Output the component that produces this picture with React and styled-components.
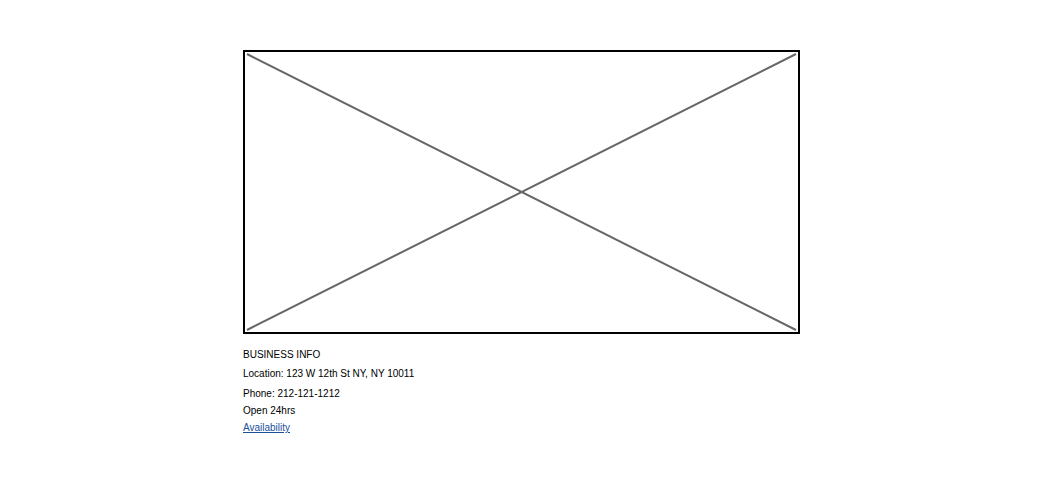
import React from 'react';
import styled, { createGlobalStyle } from "styled-components";

const GlobalStyle = createGlobalStyle`
    body {
        margin: 0;
        background: #ffffff;
        font-family: "Liberation Sans", Arial, sans-serif;
        color: #000000;
    }
`;

const Page = styled.div`
    padding: 50px 0 0 243px;
`;

const Placeholder = styled.div`
    box-sizing: border-box;
    width: 557px;
    height: 284px;
    border: 2px solid #000000;
`;

const Cross = styled.svg`
    display: block;
    width: 100%;
    height: 100%;
`;

const Info = styled.div`
    margin-top: 14px;
    display: flex;
    flex-direction: column;
    align-items: flex-start;
    font-size: 10px;
`;

const Line = styled.div`
    line-height: 13px;
    margin-bottom: ${props => props.gap}px;
`;

const Link = styled.a`
    color: #1b4f9a;
    text-decoration: underline;
    line-height: 13px;
`;

const App = () => {
    return (
        <Page>
            <GlobalStyle />
            <Placeholder>
                <Cross viewBox="0 0 553 280" preserveAspectRatio="none">
                    <line x1="2" y1="2" x2="551" y2="278" stroke="#666666" strokeWidth="2" />
                    <line x1="551" y1="2" x2="2" y2="278" stroke="#666666" strokeWidth="2" />
                </Cross>
            </Placeholder>
            <Info>
                <Line gap={6}>BUSINESS INFO</Line>
                <Line gap={7}>Location: 123 W 12th St NY, NY 10011</Line>
                <Line gap={4}>Phone: 212-121-1212</Line>
                <Line gap={4}>Open 24hrs</Line>
                <Link href="#">Availability</Link>
            </Info>
        </Page>
    );
}

export default App;
